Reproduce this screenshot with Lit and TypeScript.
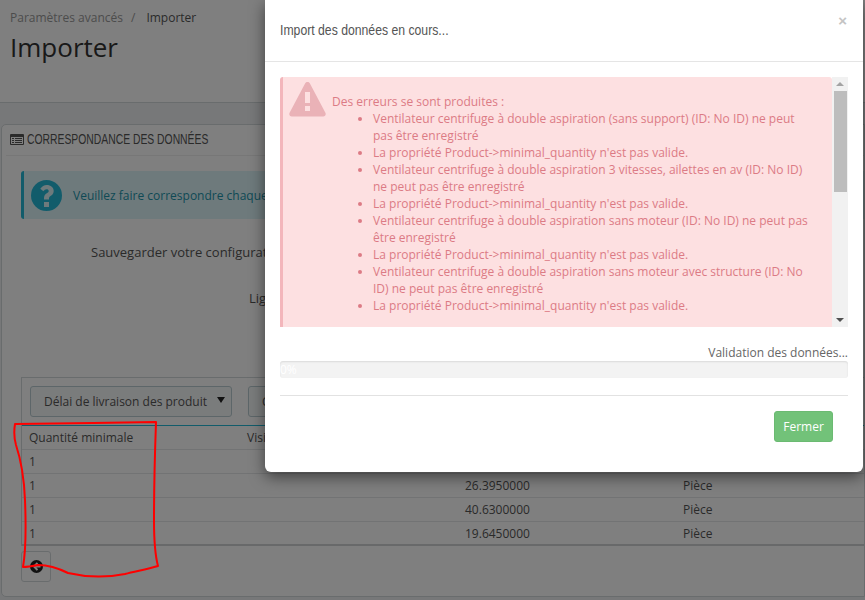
import { LitElement, html, css, svg } from "lit";
import { customElement } from "lit/decorators.js";

const MIN = "La propriété Product->minimal_quantity n'est pas valide.";
const errors = [
  "Ventilateur centrifuge à double aspiration (sans support) (ID: No ID) ne peut pas être enregistré",
  MIN,
  "Ventilateur centrifuge à double aspiration 3 vitesses, ailettes en av (ID: No ID) ne peut pas être enregistré",
  MIN,
  "Ventilateur centrifuge à double aspiration sans moteur (ID: No ID) ne peut pas être enregistré",
  MIN,
  "Ventilateur centrifuge à double aspiration sans moteur avec structure (ID: No ID) ne peut pas être enregistré",
  MIN,
];
const rows = [
  ["1", "", "12.5000000", "Pièce"],
  ["1", "", "26.3950000", "Pièce"],
  ["1", "", "40.6300000", "Pièce"],
  ["1", "", "19.6450000", "Pièce"],
];

@customElement("app-root")
export class AppRoot extends LitElement {
  static styles = css`
    :host {
      display: block;
      position: relative;
      width: 865px;
      height: 600px;
      overflow: hidden;
      font-family: "Open Sans", sans-serif;
      font-size: 12px;
      color: #555;
      background: #eff1f2;
    }
    * { box-sizing: border-box; }
    .head {
      height: 103px;
      background: #fff;
      border-bottom: 1px solid #d3d8db;
      padding: 9px 10px 0;
    }
    .crumbs { display: flex; gap: 8px; line-height: 17px; color: #999; }
    .crumbs .cur { color: #555; margin-left: 3px; }
    .title { font-size: 26px; line-height: 36px; margin-top: 3px; color: #333; }
    .panel {
      margin: 21px 0 0 1px;
      height: 473px;
      background: #fff;
      border: 1px solid #d3d8db;
      border-radius: 5px 0 0 5px;
      padding: 0 0 0 19px;
    }
    .panel-head {
      margin: 0 0 0 -15px;
      height: 31px;
      border-bottom: 1px solid #eee;
      display: flex;
      align-items: center;
      gap: 3px;
      padding: 0 0 2px 4px;
      font-size: 14px;
      color: #555;
      text-transform: uppercase;
    }
    .panel-head svg { display: block; }
    .narrow {
      display: inline-block;
      white-space: nowrap;
      font-family: "Liberation Sans", sans-serif;
      transform-origin: left center;
    }
    .panel-head .narrow { transform: scaleX(0.74); }
    .info {
      margin-top: 15px;
      height: 48px;
      background: #dcf4f9;
      border-left: 3px solid #25b9d7;
      border-radius: 3px 0 0 3px;
      display: flex;
      align-items: center;
      gap: 11px;
      padding-left: 7px;
      color: #1e94ab;
      font-size: 12px;
    }
    .save { margin: 24px 0 0 70px; font-size: 13px; line-height: 18px; }
    .lig { margin: 28px 0 0 228px; font-size: 13px; line-height: 18px; }
    .tablebox {
      margin-top: 70px;
      border: 1px solid #d3d8db;
      border-right: 0;
      border-bottom: 0;
    }
    .selects { display: flex; gap: 16px; padding: 8px 8px 8px; }
    .select {
      width: 202px;
      height: 31px;
      border: 1px solid #bbcdd2;
      border-radius: 3px;
      background: #f5f8f9;
      display: flex;
      align-items: center;
      justify-content: space-between;
      padding: 0 6px 0 13px;
      color: #555;
      white-space: nowrap;
    }
    .arrow { width: 0; height: 0; border: 4px solid transparent; border-top: 6px solid #222; border-bottom: 0; margin-top: -3px; }
    .row {
      display: grid;
      grid-template-columns: repeat(4, 218px);
      height: 24px;
      align-items: center;
      padding-left: 7px;
      border-bottom: 1px solid #e4e6e8;
      font-size: 12px;
    }
    .row.th { border-top: 1px solid #25b9d7; height: 25px; }
    .row.last { border-bottom: 2px solid #d0d3d5; height: 24px; }
    .back {
      margin-top: 5px;
      width: 30px;
      height: 31px;
      border: 1px solid #d3d8db;
      border-radius: 3px;
      display: flex;
      align-items: center;
      justify-content: center;
    }
    .overlay { position: absolute; inset: 0; background: rgba(0, 0, 0, 0.5); }
    .modal {
      position: absolute;
      left: 265px;
      top: 0;
      width: 598px;
      height: 472px;
      background: #fff;
      border-radius: 0 0 6px 6px;
      box-shadow: 0 5px 15px rgba(0, 0, 0, 0.5);
    }
    .m-head {
      height: 62px;
      border-bottom: 1px solid #e5e5e5;
      padding: 0 15px;
      display: flex;
      align-items: center;
      justify-content: space-between;
    }
    .m-title {
      font-size: 15px;
      color: #555;
      margin-top: -2px;
      transform: scaleX(0.815);
    }
    .close { font-size: 15px; font-weight: 700; color: #c4c4c4; margin: -20px 1px 0 0; line-height: 1; font-family: "Liberation Sans", sans-serif; }
    .m-body { padding: 15px 15px 0; }
    .scroll { display: flex; height: 250px; }
    .err {
      width: 552px;
      height: 250px;
      overflow: hidden;
      flex: none;
      position: relative;
      background: #fde0e1;
      border-left: 3px solid #f3b6bb;
      border-radius: 3px 3px 0 0;
      padding: 16px 15px 0 49px;
      color: #dc7b85;
      font-size: 12px;
      line-height: 17px;
    }
    .err ul { margin: 0; padding: 0 0 0 41px; }
    .warn { position: absolute; left: 6px; top: 5px; display: block; }
    .track {
      width: 16px;
      background: #f1f1f1;
      display: flex;
      flex-direction: column;
      align-items: center;
      padding: 5px 2px 0;
    }
    .up { width: 0; height: 0; border: 4px solid transparent; border-bottom: 4px solid #a3a3a3; border-top: 0; }
    .thumb { width: 13px; height: 101px; background: #bdbdbd; margin-top: 5px; }
    .down { width: 0; height: 0; border: 4px solid transparent; border-top: 4px solid #505050; border-bottom: 0; margin-top: auto; margin-bottom: 5px; }
    .status { text-align: right; line-height: 17px; margin-top: 17px; color: #666; font-size: 12px; }
    .progress {
      height: 17px;
      background: #f3f3f3;
      border-radius: 3px;
      box-shadow: inset 0 1px 2px rgba(0, 0, 0, 0.1);
      color: #fff;
      font-size: 12px;
      line-height: 17px;
    }
    .sep { height: 1px; background: #e2e2e2; margin-top: 17px; }
    .m-foot { display: flex; justify-content: flex-end; padding: 15px 30px 0 0; }
    .btn {
      width: 59px;
      height: 31px;
      background: #72c279;
      border: 1px solid #6bba72;
      border-radius: 3px;
      color: #fff;
      font-weight: 500;
      font-size: 12px;
      display: flex;
      align-items: center;
      justify-content: center;
    }
    .scribble { position: absolute; inset: 0; pointer-events: none; }
  `;

  render() {
    return html`
      <div class="head">
        <div class="crumbs"><span>Paramètres avancés</span><span>/</span><span class="cur">Importer</span></div>
        <div class="title">Importer</div>
      </div>
      <div class="panel">
        <div class="panel-head">
          <svg width="14" height="11" viewBox="0 0 14 11">
            <path fill="#555" fill-rule="evenodd" d="M1 0h12a1 1 0 0 1 1 1v9a1 1 0 0 1-1 1H1a1 1 0 0 1-1-1V1a1 1 0 0 1 1-1zM1 3v7h12V3zM2 4h2v1H2zM5 4h7v1H5zM2 6h2v1H2zM5 6h7v1H5zM2 8h2v1H2zM5 8h7v1H5z"/>
          </svg>
          <span class="narrow">Correspondance des données</span>
        </div>
        <div class="info">
          <svg width="31" height="31" viewBox="0 0 31 31">
            <path fill="#25b9d7" fill-rule="evenodd" d="M15.5 0a15.5 15.5 0 1 0 0 31a15.5 15.5 0 0 0 0-31zM13 22h5v5h-5zM15.7 5c4 0 7 2.500 7 6c0 2.800-1.700 4-3.200 5c-1 .7-1.500 1.200-1.500 2.500v1h-5v-1.500c0-2.500 1.300-3.800 2.800-4.800c1.200-.8 1.900-1.300 1.900-2.300s-.9-1.700-2.100-1.700c-1.300 0-2.300.8-3.200 2L9.300 8.800C11 6.300 13 5 15.700 5z"/>
          </svg>
          <span>Veuillez faire correspondre chaque colonne</span>
        </div>
        <div class="save">Sauvegarder votre configuration</div>
        <div class="lig">Lignes à ignorer</div>
        <div class="tablebox">
          <div class="selects">
            <div class="select"><span>Délai de livraison des produit</span><span class="arrow"></span></div>
            <div class="select"><span>Coût</span><span class="arrow"></span></div>
          </div>
          <div class="row th"><span>Quantité minimale</span><span>Visibilité</span><span></span><span></span></div>
          ${rows.map(
            (r, i) => html`<div class="row ${i === rows.length - 1 ? "last" : ""}">${r.map((c) => html`<span>${c}</span>`)}</div>`
          )}
        </div>
        <div class="back">
          <svg width="13" height="13" viewBox="0 0 13 13">
            <path fill="#222" fill-rule="evenodd" d="M6.500 0a6.500 6.500 0 1 0 0 13a6.500 6.500 0 0 0 0-13zM6.800 2.300l1.400 1.400L6.300 5.500H10.500v2H6.300l1.900 1.800-1.400 1.400L2.600 6.500z"/>
          </svg>
        </div>
      </div>
      <div class="overlay"></div>
      <div class="modal">
        <div class="m-head">
          <span class="m-title narrow">Import des données en cours...</span>
          <span class="close">×</span>
        </div>
        <div class="m-body">
          <div class="scroll">
            <div class="err">
              <svg class="warn" width="37" height="35" viewBox="0 0 37 35">
                <path fill="#eab2b7" fill-rule="evenodd" d="M18.500 0c1 0 1.800.5 2.300 1.300l15.600 29.500c.9 1.800-.2 3.700-2.200 3.700H2.800c-2 0-3.100-1.900-2.200-3.700L16.200 1.300C16.700.5 17.500 0 18.500 0zM16 10v11h5V10zM16 24v5h5v-5z"/>
              </svg>
              Des erreurs se sont produites :
              <ul>${errors.map((e) => html`<li>${e}</li>`)}</ul>
            </div>
            <div class="track"><span class="up"></span><span class="thumb"></span><span class="down"></span></div>
          </div>
          <div class="status">Validation des données...</div>
          <div class="progress">0%</div>
          <div class="sep"></div>
        </div>
        <div class="m-foot"><span class="btn">Fermer</span></div>
      </div>
      <svg class="scribble" width="865" height="600" viewBox="0 0 865 600">
        ${svg`<path fill="none" stroke="#f00" stroke-width="2" stroke-linejoin="round" d="M15 424 C60 423 110 423 156 422 C155 450 154 490 154 520 C154 540 155 555 158 566 C145 570 135 571 125 574 C105 578 85 577 68 573 C60 569 50 565 38 565 C33 566 28 567 23 567 C26 550 26 525 25 500 C24 475 21 460 16 445 C14 438 14 430 15 424 Z"/>`}
      </svg>
    `;
  }
}
